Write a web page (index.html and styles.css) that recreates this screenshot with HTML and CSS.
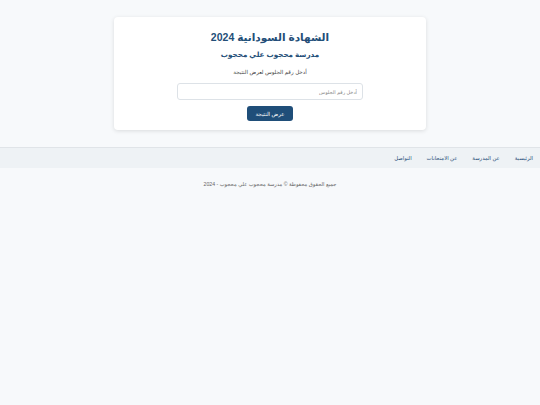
FILE: index.html
```html
<!DOCTYPE html>
<html lang="ar" dir="rtl">
<head>
  <meta charset="UTF-8">
  <meta name="viewport" content="width=device-width, initial-scale=1.0">
  <title>الشهادة السودانية 2024</title>
  <link rel="stylesheet" href="styles.css">
</head>
<body>
  <main class="page">
    <div class="card">
      <h1>الشهادة السودانية 2024</h1>
      <h2>مدرسة محجوب علي محجوب</h2>
      <p class="hint">أدخل رقم الجلوس لعرض النتيجة</p>
      <input type="text" class="seat-input" placeholder="أدخل رقم الجلوس">
      <button class="show-button">عرض النتيجة</button>
    </div>
  </main>

  <nav class="nav">
    <a href="#">الرئيسية</a>
    <a href="#">عن المدرسة</a>
    <a href="#">عن الامتحانات</a>
    <a href="#">التواصل</a>
  </nav>

  <footer class="footer">
    جميع الحقوق محفوظة © مدرسة محجوب علي محجوب - 2024
  </footer>
</body>
</html>
```

FILE: styles.css
```css
/* General Styles */
body {
  font-family: 'Liberation Sans', Arial, 'DejaVu Sans', sans-serif;
  background: #f7f9fb;
  margin: 0;
  color: #333;
}

.page {
  padding-top: 17px;
}

.card {
  width: 312px;
  margin: 0 auto;
  box-sizing: border-box;
  background: #fff;
  border-radius: 4px;
  box-shadow: 0 1px 4px rgba(0, 0, 0, 0.12);
  padding: 10px 0 9px;
  display: flex;
  flex-direction: column;
  align-items: center;
  text-align: center;
}

h1 {
  font-size: 10.5px;
  line-height: 20px;
  margin: 0;
  color: #234e78;
}

h2 {
  font-size: 7.2px;
  line-height: 14px;
  margin: 1px 0 0;
  color: #234e78;
}

.hint {
  font-size: 5.5px;
  line-height: 10px;
  margin: 5px 0 0;
  color: #444;
}

.seat-input {
  width: 186px;
  height: 17px;
  box-sizing: border-box;
  margin-top: 6px;
  padding: 0 5px;
  font-family: inherit;
  font-size: 5px;
  border: 1px solid #dde2e7;
  border-radius: 3px;
  outline: none;
}

.seat-input::placeholder {
  color: #888;
}

.show-button {
  width: 46px;
  height: 15px;
  margin-top: 6px;
  padding: 0;
  font-family: inherit;
  font-size: 5.5px;
  border: none;
  border-radius: 3px;
  background: #1f4e79;
  color: #fff;
  cursor: pointer;
}

.nav {
  margin-top: 17px;
  height: 21px;
  box-sizing: border-box;
  background: #eef2f5;
  border-top: 1px solid #e0e4e8;
  display: flex;
  align-items: center;
  gap: 15px;
  padding-right: 7px;
}

.nav a {
  font-size: 5.3px;
  color: #1f4e79;
  text-decoration: none;
}

.footer {
  text-align: center;
  font-size: 5.2px;
  line-height: 10px;
  margin-top: 11px;
  color: #666;
}
```
